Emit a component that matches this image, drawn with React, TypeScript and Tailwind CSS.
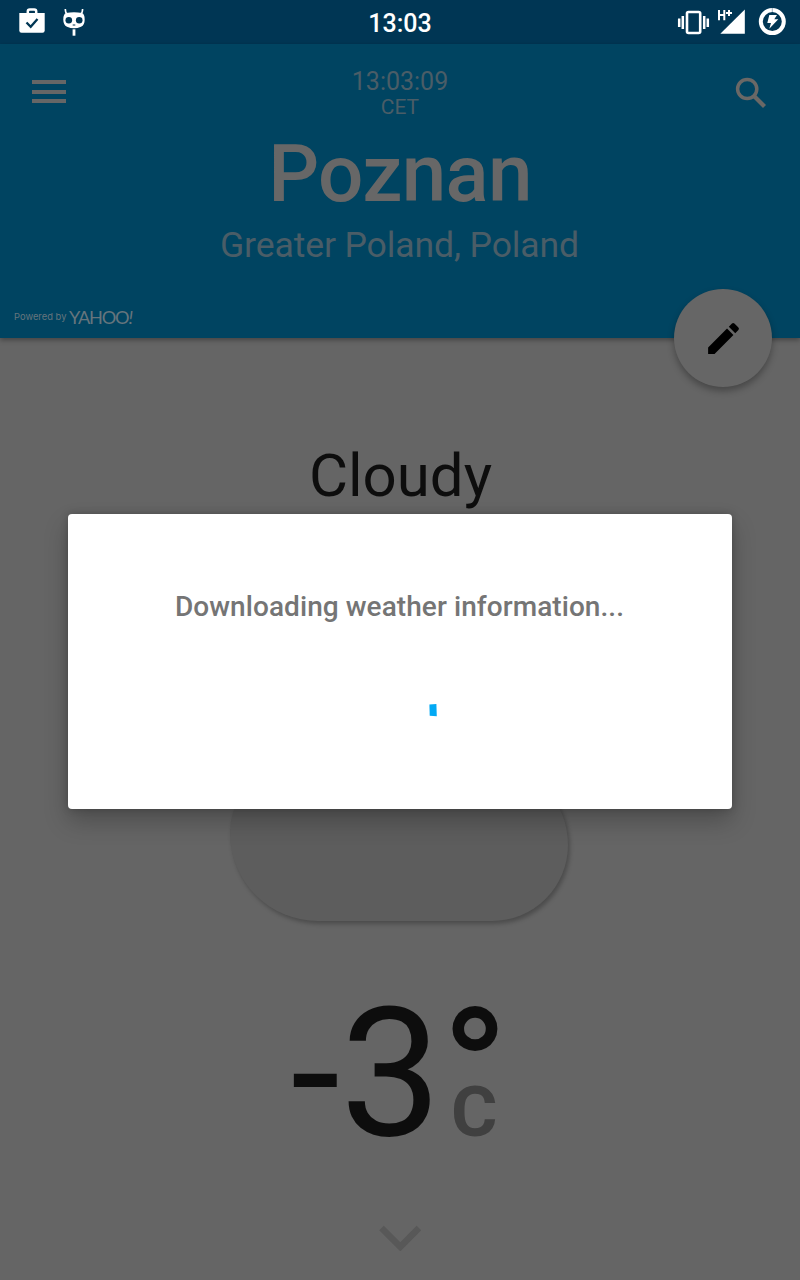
import React from "react";

function StatusBar() {
  return (
    <div className="flex h-[44px] shrink-0 items-start justify-between bg-[#003654] text-white">
      <div className="flex w-[300px] pl-[18px]">
        <svg className="mt-[7px] h-[27px] w-[28px]" viewBox="18 7 28 27">
          <path d="M27.8 14V11.5Q27.8 9.5 29.8 9.5H34.2Q36.2 9.5 36.2 11.5V14" fill="none" stroke="#fff" strokeWidth="2.5" />
          <path d="M19.3 13H44.7V30.5Q44.7 32.7 42.5 32.7H21.5Q19.3 32.7 19.3 30.5Z" fill="#fff" />
          <path d="M26.5 22.5L30.7 26.7L37.5 19" fill="none" stroke="#003654" strokeWidth="2.3" />
        </svg>
        <svg className="mt-[7px] ml-[15px] h-[30px] w-[26px]" viewBox="61 7 26 30">
          <path d="M65.3 9Q65.3 13 67.5 14.5M82.6 9Q82.6 13 80.4 14.5" fill="none" stroke="#fff" strokeWidth="1.6" />
          <path d="M66 13Q74 11.5 82 13Q84.7 14 84.7 19.5Q84.7 25 81 26.8Q77.5 28.3 74 28.3Q70.5 28.3 67 26.8Q63.3 25 63.3 19.5Q63.3 14 66 13Z" fill="#fff" />
          <circle cx="68.8" cy="20.2" r="3.3" fill="#003654" />
          <circle cx="79.2" cy="20.2" r="3.3" fill="#003654" />
          <path d="M72.7 25H75.3" stroke="#003654" strokeWidth="1" />
          <rect x="72.6" y="29.3" width="2.8" height="6.4" fill="#fff" />
        </svg>
      </div>
      <div className="mt-[9px] text-[25px] leading-[29px] font-medium">13:03</div>
      <div className="flex w-[300px] justify-end pr-[12px]">
        <svg className="mt-[7px] h-[30px] w-[112px]" viewBox="676 7 112 30">
          <rect x="687" y="12" width="13.2" height="21" rx="1.5" fill="none" stroke="#fff" strokeWidth="2.6" />
          <path d="M679.2 18.5V27M682.8 16V29M704.2 16V29M707.8 18.5V27" stroke="#fff" strokeWidth="2.5" />
          <path d="M744.8 9.5V33.7H720.3Z" fill="#fff" />
          <path d="M719 10V20.3M724.3 10V20.3M719 15H724.3M726 13H732M729 10V16" fill="none" stroke="#fff" strokeWidth="2" />
          <circle cx="772.3" cy="21.6" r="11.5" fill="none" stroke="#fff" strokeWidth="4" />
          <path d="M772.3 8V12" stroke="#9ab0bd" strokeWidth="1" />
          <path d="M769.3 15H777L774.3 19.2H778.3L769.3 28.8L771 23H767.3Z" fill="#fff" />
        </svg>
      </div>
    </div>
  );
}

function Header() {
  return (
    <header className="relative z-10 flex h-[294px] shrink-0 flex-col bg-[#004461] shadow-[0_2px_5px_rgba(0,0,0,0.35)]">
      <div className="flex h-[77px] justify-between">
        <div className="flex w-[200px] flex-col gap-[5.6px] pt-[36px] pl-[32px]">
          <div className="h-[4px] w-[34px] bg-[#666]" />
          <div className="h-[4px] w-[34px] bg-[#666]" />
          <div className="h-[4px] w-[34px] bg-[#666]" />
        </div>
        <div className="pt-[24px] text-center text-[#4a5d67]">
          <div className="text-[25px] leading-[27px]">13:03:09</div>
          <div className="text-[21px] leading-[24px]">CET</div>
        </div>
        <div className="flex w-[200px] justify-end pt-[33px] pr-[33px]">
          <svg className="h-[32px] w-[32px]" viewBox="735 77 32 32" fill="none" stroke="#6a6866">
            <circle cx="747.2" cy="89" r="9.6" strokeWidth="3.5" />
            <path d="M754 96L764.5 106.5" strokeWidth="4.2" />
          </svg>
        </div>
      </div>
      <h1 className="mt-[6px] text-center text-[80px] leading-[94px] font-medium tracking-[-0.7px] text-[#676767]">Poznan</h1>
      <p className="mt-[3px] pr-[1px] text-center text-[35.6px] leading-[42px] tracking-[-0.13px] text-[#4a5d67]">Greater Poland, Poland</p>
      <div className="mt-[40px] flex items-start gap-[2px] pl-[14px] text-[#66757d]">
        <span className="w-[53px] pt-[1px] font-['Inter'] text-[9.4px] leading-[20px] whitespace-nowrap">Powered by</span>
        <span className="pt-[1px] font-['Lato'] text-[18.2px] leading-[20px] font-normal tracking-[-1.2px]">YAHOO<i>!</i></span>
      </div>
      <button className="absolute top-[245px] left-[674px] flex size-[98px] items-center justify-center rounded-full bg-[#666] shadow-[0_4px_7px_rgba(0,0,0,0.3)]">
        <svg className="size-[41px]" viewBox="0 0 24 24" fill="#000">
          <path d="M3 17.25V21h3.75L17.81 9.94l-3.75-3.75L3 17.25zM20.71 7.04a.996.996 0 0 0 0-1.41l-2.34-2.34a.996.996 0 0 0-1.41 0l-1.83 1.83 3.75 3.75 1.83-1.83z" />
        </svg>
      </button>
    </header>
  );
}

function Weather() {
  return (
    <main className="flex flex-1 flex-col items-center bg-[#656565] pt-[103px] text-[#0d0d0d]">
      <div className="pl-[1px] text-[60px] leading-[70px]">Cloudy</div>
      <div className="mt-[250px] mr-[2px] h-[160px] w-[338px] rounded-tl-[72px] rounded-tr-[84px] rounded-br-[76px] rounded-bl-[88px] bg-[#5d5d5d] shadow-[2px_3px_4px_rgba(0,0,0,0.25)]" />
      <div className="flex h-[260px] w-[800px] pt-[48px] pl-[290.5px]">
        <div className="text-[180px] leading-[210px]">-3</div>
        <div className="flex flex-col pt-[2px]">
          <span className="h-[100px] text-[175px] leading-[203px] font-medium">°</span>
          <span className="pl-[9.5px] text-[71px] leading-[82px] font-bold text-[#404040]">C</span>
        </div>
      </div>
      <svg className="mt-[44px] h-[26px] w-[42px]" viewBox="379 1225 42 26">
        <path d="M381.5 1228L400.3 1246.8L419 1228" fill="none" stroke="#585858" strokeWidth="6.5" />
      </svg>
    </main>
  );
}

export default function App() {
  return (
    <div className="relative flex h-[1280px] w-[800px] flex-col overflow-hidden font-['Roboto',sans-serif]">
      <StatusBar />
      <Header />
      <Weather />
      <div className="absolute top-[514px] left-[68px] z-20 flex h-[295px] w-[664px] flex-col items-center rounded-[4px] bg-white pt-[76px] shadow-[0_12px_24px_rgba(0,0,0,0.24),0_0_8px_rgba(0,0,0,0.2)]">
        <p className="pr-[1px] text-[28px] leading-[33px] font-medium tracking-[0.07px] text-[#757575]">Downloading weather information...</p>
        <svg className="mt-[80px] ml-[66px] h-[14px] w-[10px]" viewBox="428 703 10 14">
          <path d="M429.4 704.6L436.4 704.1L436.8 716.3L429.7 715.8Z" fill="#03a9f4" />
        </svg>
      </div>
    </div>
  );
}
